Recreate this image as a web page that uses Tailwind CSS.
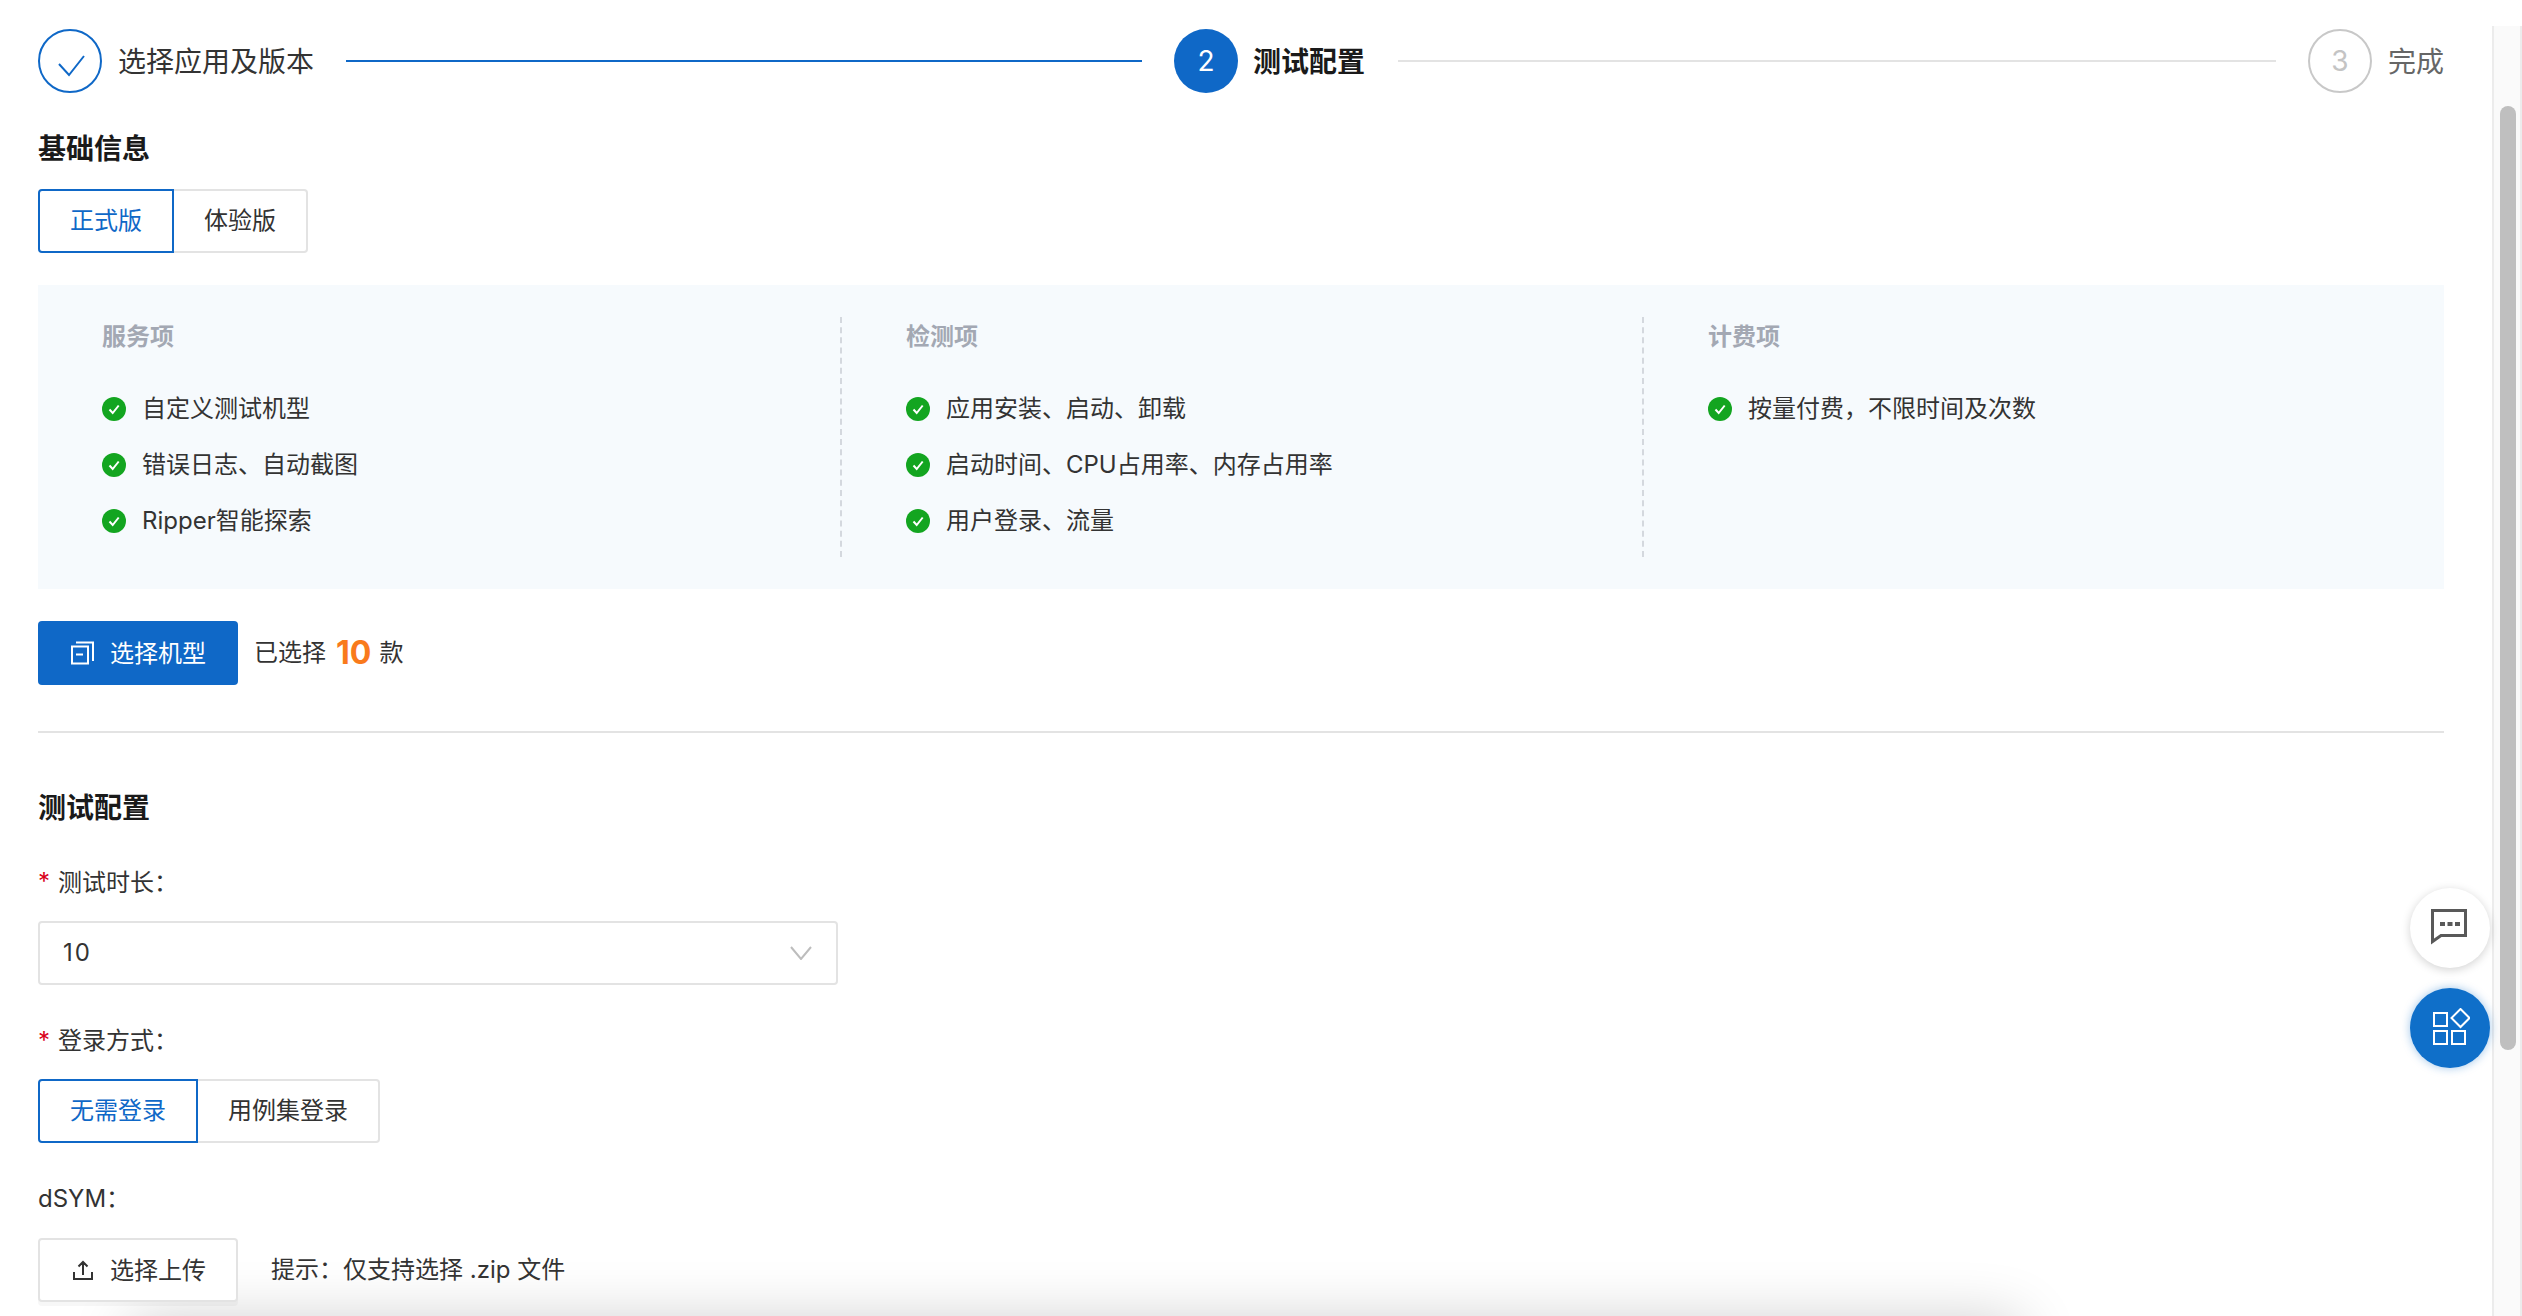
<!DOCTYPE html>
<html lang="zh-CN">
<head>
  <meta charset="UTF-8" />
  <title>测试配置</title>
  <script src="https://cdn.jsdelivr.net/npm/@tailwindcss/browser@4"></script>
</head>
<body class="bg-white text-[#333] text-[24px] font-['Inter','Noto_Sans_CJK_SC',sans-serif]">
  <div class="relative flex h-[1316px] w-[2522px] overflow-hidden">

    <main class="w-[2492px] pl-[38px] pr-[48px] pt-[29px]">
      <!-- Steps -->
      <div class="flex h-[64px] items-center">
        <div class="flex h-[64px] w-[64px] items-center justify-center rounded-full border-2 border-[#0f68c7]">
          <svg class="mt-[10px] ml-[4px]" width="28" height="22" viewBox="0 0 28 22" fill="none" stroke="#0f68c7" stroke-width="2"><path d="M1 9l10 11L26 1" /></svg>
        </div>
        <span class="ml-[16px] pt-[2px] text-[28px] leading-[40px] text-[#333]">选择应用及版本</span>
        <div class="ml-[32px] h-[2px] w-[796px] bg-[#0f68c7]"></div>
        <div class="ml-[32px] flex h-[64px] w-[64px] items-center justify-center rounded-full bg-[#0f68c7] text-[28px] text-white">2</div>
        <span class="ml-[15px] pt-[2px] text-[28px] leading-[40px] font-bold text-[#1a1a1a]">测试配置</span>
        <div class="ml-[33px] h-[2px] w-[878px] bg-[#e3e3e3]"></div>
        <div class="ml-[32px] flex h-[64px] w-[64px] items-center justify-center rounded-full border-2 border-[#c8c8c8] text-[28px] text-[#c4c4c4]">3</div>
        <span class="ml-[16px] pt-[2px] text-[28px] leading-[40px] text-[#666]">完成</span>
      </div>

      <!-- Basic info -->
      <h2 class="mt-[35px] pt-[3px] text-[28px] leading-[37px] font-bold text-[#1a1a1a]">基础信息</h2>
      <div class="mt-[21px] flex">
        <button class="h-[64px] w-[136px] rounded-l-[4px] border-2 border-[#0f68c7] text-[#0f68c7]">正式版</button>
        <button class="h-[64px] w-[134px] rounded-r-[4px] border-2 border-l-0 border-[#e3e3e3]">体验版</button>
      </div>

      <div class="mt-[32px] grid h-[304px] grid-cols-3 bg-[#f6fafd] py-[32px]">
        <div class="pl-[64px]">
          <div class="flex h-[40px] items-center font-semibold text-[#a3a8b3]">服务项</div>
          <ul class="mt-[32px] space-y-[16px]">
            <li class="flex h-[40px] items-center gap-[16px]">
              <svg width="24" height="24" viewBox="0 0 24 24"><circle cx="12" cy="12" r="12" fill="#13a520" /><path d="M7.500 12.500l3.200 3.500 6-7.500" fill="none" stroke="#fff" stroke-width="2" /></svg>
              <span>自定义测试机型</span>
            </li>
            <li class="flex h-[40px] items-center gap-[16px]">
              <svg width="24" height="24" viewBox="0 0 24 24"><circle cx="12" cy="12" r="12" fill="#13a520" /><path d="M7.500 12.500l3.200 3.500 6-7.500" fill="none" stroke="#fff" stroke-width="2" /></svg>
              <span>错误日志、自动截图</span>
            </li>
            <li class="flex h-[40px] items-center gap-[16px]">
              <svg width="24" height="24" viewBox="0 0 24 24"><circle cx="12" cy="12" r="12" fill="#13a520" /><path d="M7.500 12.500l3.200 3.500 6-7.500" fill="none" stroke="#fff" stroke-width="2" /></svg>
              <span>Ripper智能探索</span>
            </li>
          </ul>
        </div>
        <div class="border-l-2 border-dashed border-[#d4d8de] pl-[64px]">
          <div class="flex h-[40px] items-center font-semibold text-[#a3a8b3]">检测项</div>
          <ul class="mt-[32px] space-y-[16px]">
            <li class="flex h-[40px] items-center gap-[16px]">
              <svg width="24" height="24" viewBox="0 0 24 24"><circle cx="12" cy="12" r="12" fill="#13a520" /><path d="M7.500 12.500l3.200 3.500 6-7.500" fill="none" stroke="#fff" stroke-width="2" /></svg>
              <span>应用安装、启动、卸载</span>
            </li>
            <li class="flex h-[40px] items-center gap-[16px]">
              <svg width="24" height="24" viewBox="0 0 24 24"><circle cx="12" cy="12" r="12" fill="#13a520" /><path d="M7.500 12.500l3.200 3.500 6-7.500" fill="none" stroke="#fff" stroke-width="2" /></svg>
              <span>启动时间、CPU占用率、内存占用率</span>
            </li>
            <li class="flex h-[40px] items-center gap-[16px]">
              <svg width="24" height="24" viewBox="0 0 24 24"><circle cx="12" cy="12" r="12" fill="#13a520" /><path d="M7.500 12.500l3.200 3.500 6-7.500" fill="none" stroke="#fff" stroke-width="2" /></svg>
              <span>用户登录、流量</span>
            </li>
          </ul>
        </div>
        <div class="border-l-2 border-dashed border-[#d4d8de] pl-[64px]">
          <div class="flex h-[40px] items-center font-semibold text-[#a3a8b3]">计费项</div>
          <ul class="mt-[32px] space-y-[16px]">
            <li class="flex h-[40px] items-center gap-[16px]">
              <svg width="24" height="24" viewBox="0 0 24 24"><circle cx="12" cy="12" r="12" fill="#13a520" /><path d="M7.500 12.500l3.200 3.500 6-7.500" fill="none" stroke="#fff" stroke-width="2" /></svg>
              <span>按量付费，不限时间及次数</span>
            </li>
          </ul>
        </div>
      </div>

      <div class="mt-[32px] flex items-center">
        <button class="flex h-[64px] w-[200px] items-center rounded-[4px] bg-[#0f68c7] pl-[32px] text-white">
          <svg width="24" height="24" viewBox="0 0 24 24" fill="none" stroke="#fff" stroke-width="2"><path d="M2 5.500h16v17H2zM6 13.500h7M6 1.500h17V20" /></svg>
          <span class="ml-[16px] pt-[2px]">选择机型</span>
        </button>
        <span class="ml-[16px]">已选择</span>
        <span class="ml-[10px] text-[32px] font-bold text-[#f97a1c]">10</span>
        <span class="ml-[8px]">款</span>
      </div>

      <div class="mt-[46px] h-[2px] bg-[#e3e3e3]"></div>

      <!-- Test config -->
      <h2 class="mt-[54px] pt-[2px] text-[28px] leading-[38px] font-bold text-[#1a1a1a]">测试配置</h2>

      <div class="mt-[35px] flex h-[40px] items-center">
        <span class="w-[20px] text-[#d9001b]">*</span><span class="pt-[2px]">测试时长：</span>
      </div>
      <div class="mt-[19px] flex h-[64px] w-[800px] items-center justify-between rounded-[4px] border-2 border-[#e3e3e3] pl-[23px] pr-[24px]">
        <span class="tracking-[2px]">10</span>
        <svg width="22" height="14" viewBox="0 0 22 14" fill="none" stroke="#bdbdbd" stroke-width="2"><path d="M1 1l10 12L21 1" /></svg>
      </div>

      <div class="mt-[36px] flex h-[40px] items-center">
        <span class="w-[20px] text-[#d9001b]">*</span><span>登录方式：</span>
      </div>
      <div class="mt-[18px] flex">
        <button class="h-[64px] w-[160px] rounded-l-[4px] border-2 border-[#0f68c7] text-[#0f68c7]">无需登录</button>
        <button class="h-[64px] w-[182px] rounded-r-[4px] border-2 border-l-0 border-[#e3e3e3]">用例集登录</button>
      </div>

      <div class="mt-[36px] flex h-[40px] items-center">dSYM：</div>
      <div class="relative z-10 mt-[19px] flex items-center">
        <button class="flex h-[64px] w-[200px] items-center rounded-[4px] border-2 border-[#e3e3e3] bg-white pl-[32px] shadow-[0_4px_0_rgba(0,0,0,0.03)]">
          <svg width="22" height="22" viewBox="0 0 22 22" fill="none" stroke="#333" stroke-width="2"><path d="M2 13v7h18v-7M11 16V3M6.500 7.500L11 3l4.500 4.500" /></svg>
          <span class="ml-[16px] pt-[2px]">选择上传</span>
        </button>
        <span class="ml-[33px]">提示：仅支持选择 .zip 文件</span>
      </div>
    </main>

    <!-- Scrollbar -->
    <aside class="mt-[26px] h-[1290px] w-[30px] border-x-2 border-[#ececec] bg-[#fafafa] pl-[6px]">
      <div class="mt-[80px] h-[944px] w-[16px] rounded-full bg-[#bfbfbf]"></div>
    </aside>

    <!-- Floating buttons -->
    <button class="absolute top-[888px] left-[2410px] flex h-[80px] w-[80px] items-center justify-center rounded-full bg-white shadow-[0_2px_10px_rgba(0,0,0,0.18)]">
      <svg width="40" height="40" viewBox="0 0 40 40" fill="none"><path d="M2.500 2.500h33v25H11l-8.500 6z" stroke="#595959" stroke-width="3" /><path d="M10 14h5v4h-5zM17.500 14h5v4h-5zM25 14h5v4h-5z" fill="#595959" /></svg>
    </button>
    <button class="absolute top-[988px] left-[2410px] flex h-[80px] w-[80px] items-center justify-center rounded-full bg-[#0f6fc9] shadow-[0_0_10px_rgba(15,111,201,0.4)]">
      <svg width="40" height="40" viewBox="0 0 40 40" fill="none" stroke="#fff" stroke-width="2"><rect x="4" y="5" width="13" height="13" /><rect x="4" y="23" width="13" height="13" /><rect x="22" y="23" width="13" height="13" /><path d="M30.500 1l9 9-9 9-9-9z" /></svg>
    </button>

    <!-- Shadow from the sheet just below the fold -->
    <div class="absolute top-[1328px] left-[130px] h-[100px] w-[1890px] bg-white shadow-[0_-8px_60px_rgba(0,0,0,0.2)]"></div>
  </div>
</body>
</html>
